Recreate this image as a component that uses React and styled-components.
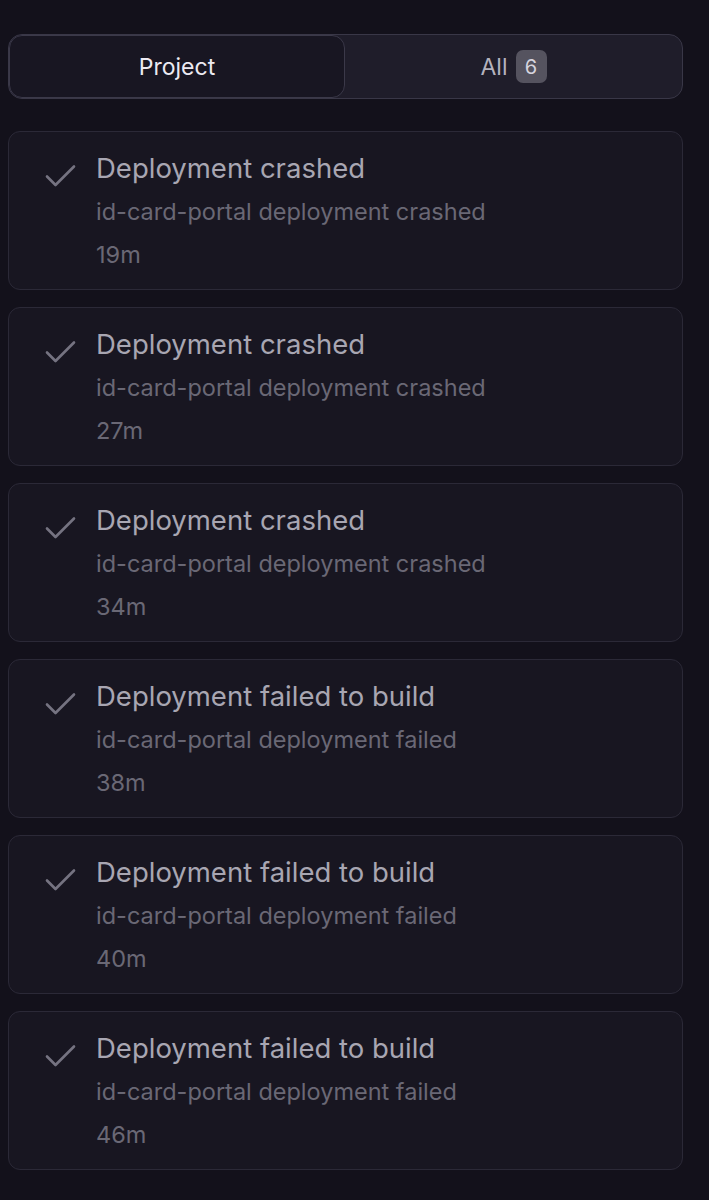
import React from "react";
import styled, { createGlobalStyle } from "styled-components";

const Global = createGlobalStyle`
  html, body { margin: 0; padding: 0; background: #13111b; }
  body { font-family: Inter, "Noto Sans", sans-serif; -webkit-font-smoothing: antialiased; }
`;

const Page = styled.div`
  width: 683px;
  padding: 34px 0 30px 8px;
  display: flex;
  flex-direction: column;
  gap: 32px;
  min-height: 1200px;
  box-sizing: border-box;
`;

const Tabs = styled.div`
  display: flex;
  height: 65px;
  box-sizing: border-box;
  border: 1px solid #393747;
  border-radius: 14px;
  background: #1f1d2a;
  overflow: hidden;
`;

const Tab = styled.div`
  flex: ${(p) => (p.$active ? "0 0 336px" : "1")};
  display: flex;
  align-items: center;
  justify-content: center;
  gap: 8px;
  font-size: 23px;
  color: ${(p) => (p.$active ? "#eceaf2" : "#b4b2be")};
  background: ${(p) => (p.$active ? "#181622" : "transparent")};
  border: ${(p) => (p.$active ? "1px solid #3b3949" : "none")};
  border-radius: 13px;
  box-sizing: border-box;
`;

const Badge = styled.span`
  display: inline-flex;
  align-items: center;
  justify-content: center;
  width: 31px;
  height: 33px;
  border-radius: 7px;
  background: #55535f;
  color: #d6d4de;
  font-size: 20px;
`;

const List = styled.div`
  display: flex;
  flex-direction: column;
  gap: 17px;
`;

const Card = styled.div`
  display: flex;
  gap: 20px;
  padding: 19px 20px 18px 36px;
  border: 1px solid #2b2937;
  border-radius: 12px;
  background: #181621;
  box-sizing: border-box;
  height: 159px;
`;

const IconWrap = styled.div`
  margin-top: 13px;
  width: 31px;
  height: 24px;
  color: #757381;
  flex: none;
`;

const Body = styled.div`
  display: flex;
  flex-direction: column;
  gap: 10px;
`;

const Title = styled.div`
  font-size: 27.5px;
  line-height: 34px;
  color: #a8a6b2;
`;

const Sub = styled.div`
  font-size: 23.5px;
  line-height: 33px;
  color: #6a6875;
`;

const Check = () => (
  <svg width="31" height="24" viewBox="0 0 31 24" fill="none">
    <polyline points="2,12.5 10.5,21 29,2.5" stroke="currentColor" strokeWidth="2.6" strokeLinecap="round" strokeLinejoin="round" />
  </svg>
);

const items = [
  ["Deployment crashed", "id-card-portal deployment crashed", "19m"],
  ["Deployment crashed", "id-card-portal deployment crashed", "27m"],
  ["Deployment crashed", "id-card-portal deployment crashed", "34m"],
  ["Deployment failed to build", "id-card-portal deployment failed", "38m"],
  ["Deployment failed to build", "id-card-portal deployment failed", "40m"],
  ["Deployment failed to build", "id-card-portal deployment failed", "46m"],
];

export default function App() {
  return (
    <>
      <Global />
      <Page>
        <Tabs>
          <Tab $active>Project</Tab>
          <Tab>
            All <Badge>6</Badge>
          </Tab>
        </Tabs>
        <List>
          {items.map(([t, s, m], i) => (
            <Card key={i}>
              <IconWrap>
                <Check />
              </IconWrap>
              <Body>
                <Title>{t}</Title>
                <Sub>{s}</Sub>
                <Sub>{m}</Sub>
              </Body>
            </Card>
          ))}
        </List>
      </Page>
    </>
  );
}
